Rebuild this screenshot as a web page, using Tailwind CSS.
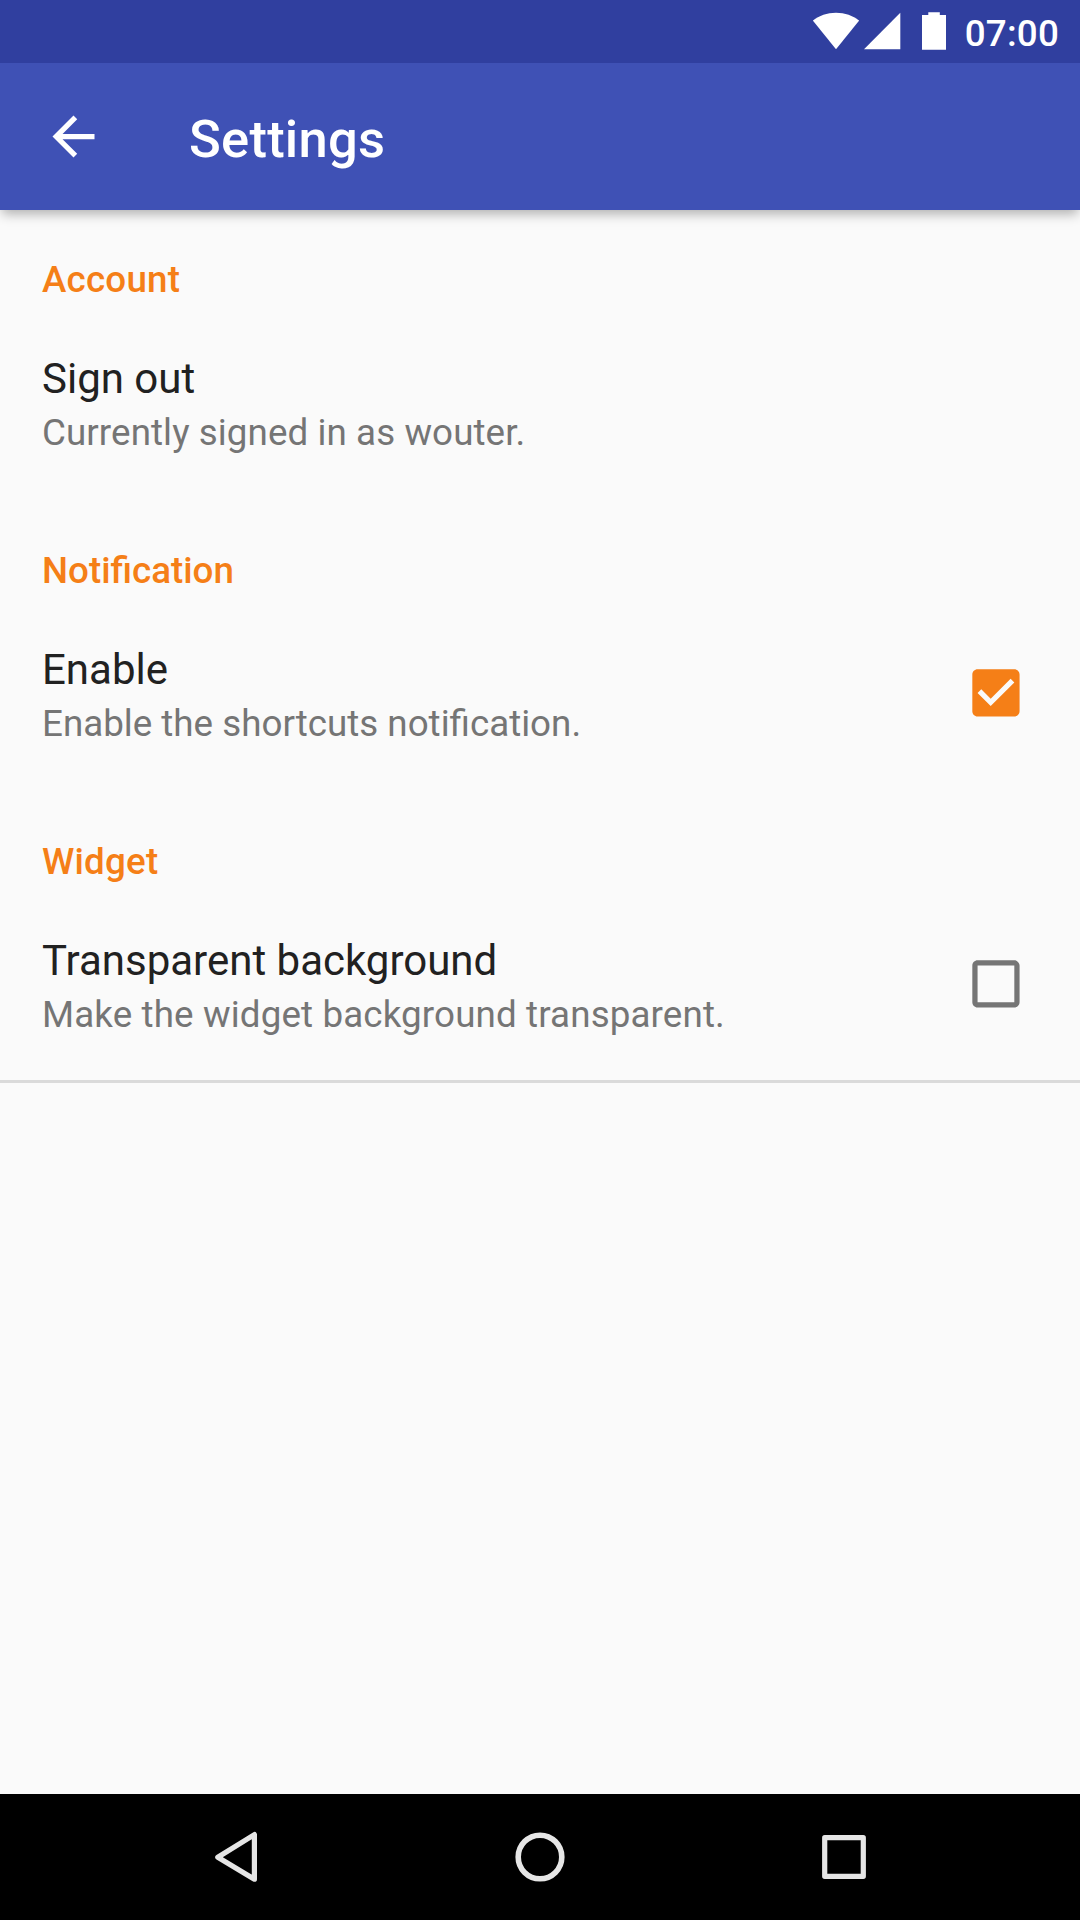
<!DOCTYPE html>
<html lang="en">
<head>
<meta charset="utf-8">
<title>Settings</title>
<script src="https://cdn.jsdelivr.net/npm/@tailwindcss/browser@4"></script>
</head>
<body class="bg-[#fafafa]">
<div class="flex h-[1920px] w-[1080px] flex-col overflow-hidden bg-[#fafafa] font-['Roboto',sans-serif]">
  <div class="z-20 flex h-[63px] shrink-0 items-start justify-end bg-[#303f9f] pr-[21px] text-white">
    <svg class="h-[63px] w-[46px]" viewBox="813 0 46 63" fill="currentColor"><path d="M836 49.2L812.9 20.6C819 15.6 827 12.7 836 12.7S853 15.6 859.1 20.6Z"/></svg>
    <svg class="ml-[5px] h-[63px] w-[37px]" viewBox="864 0 37 63" fill="currentColor"><path d="M864 49.3L900.3 12.8V49.3Z"/></svg>
    <svg class="ml-[21px] h-[63px] w-[24px]" viewBox="922 0 24 63" fill="currentColor"><path d="M922 15H928.3V12.2H939.8V15H946V49.8H922Z"/></svg>
    <span class="ml-[19px] mt-[12px] text-[36.75px] leading-[44px] font-medium tracking-[0.2px]">07:00</span>
  </div>
  <header class="z-10 flex h-[147px] shrink-0 items-center bg-[#3f51b5] pl-[42px] text-white shadow-[0_6px_11px_-2px_rgba(0,0,0,0.3)]">
    <svg class="size-[63px]" viewBox="0 0 24 24" fill="currentColor"><path d="M20 11H7.83l5.59-5.59L12 4l-8 8 8 8 1.41-1.41L7.83 13H20v-2z"/></svg>
    <h1 class="ml-[84px] mt-[5px] text-[52.5px] leading-[62px] font-medium tracking-[0.25px]">Settings</h1>
  </header>
  <main class="flex grow flex-col">
    <section class="h-[291px] px-[42px] pt-[48px]">
      <h2 class="text-[36.75px] leading-[44px] font-medium tracking-[0.2px] text-[#f57f17]">Account</h2>
      <p class="mt-[52px] text-[42px] leading-[50px] text-[#212121]">Sign out</p>
      <p class="mt-[7px] text-[36.75px] leading-[44px] tracking-[0.08px] text-[#757575]">Currently signed in as wouter.</p>
    </section>
    <section class="flex h-[291px] justify-between pr-[53px] pl-[42px] pt-[48px]">
      <div>
        <h2 class="text-[36.75px] leading-[44px] font-medium text-[#f57f17]">Notification</h2>
        <p class="mt-[52px] text-[42px] leading-[50px] text-[#212121]">Enable</p>
        <p class="mt-[7px] text-[36.75px] leading-[44px] text-[#757575]">Enable the shortcuts notification.</p>
      </div>
      <svg class="mt-[113px] size-[63px] text-[#f57f17]" viewBox="-0.17 0.2 24 24" fill="currentColor"><path d="M19 3H5c-1.11 0-2 .9-2 2v14c0 1.1.89 2 2 2h14c1.11 0 2-.9 2-2V5c0-1.1-.89-2-2-2zm-9 14l-5-5 1.41-1.41L10 14.17l7.59-7.59L19 8l-9 9z"/></svg>
    </section>
    <section class="flex h-[291px] justify-between border-b-3 border-[#dadada] pr-[53px] pl-[42px] pt-[48px]">
      <div>
        <h2 class="text-[36.75px] leading-[44px] font-medium tracking-[0.2px] text-[#f57f17]">Widget</h2>
        <p class="mt-[52px] text-[42px] leading-[50px] text-[#212121]">Transparent background</p>
        <p class="mt-[7px] text-[36.75px] leading-[44px] tracking-[0.13px] text-[#757575]">Make the widget background transparent.</p>
      </div>
      <svg class="mt-[113px] size-[63px] text-[#757575]" viewBox="-0.17 0.2 24 24" fill="currentColor"><path d="M19 5v14H5V5h14m0-2H5c-1.1 0-2 .9-2 2v14c0 1.1.9 2 2 2h14c1.1 0 2-.9 2-2V5c0-1.1-.9-2-2-2z"/></svg>
    </section>
  </main>
  <nav class="flex h-[126px] shrink-0 justify-center bg-black text-[#e6e6e6]">
    <svg class="h-[126px] w-[304px]" viewBox="84 1794 304 126" fill="none" stroke="currentColor" stroke-width="5.2" stroke-linejoin="round"><path d="M217.8 1857.2L254.4 1834.6V1879.2Z"/></svg>
    <svg class="h-[126px] w-[304px]" viewBox="388 1794 304 126" fill="none" stroke="currentColor" stroke-width="5.6"><circle cx="540" cy="1857" r="21.8"/></svg>
    <svg class="h-[126px] w-[304px]" viewBox="692 1794 304 126" fill="none" stroke="currentColor" stroke-width="5.2" stroke-linejoin="round"><path d="M824.7 1837.7H863.3V1876.3H824.7Z"/></svg>
  </nav>
</div>
</body>
</html>
